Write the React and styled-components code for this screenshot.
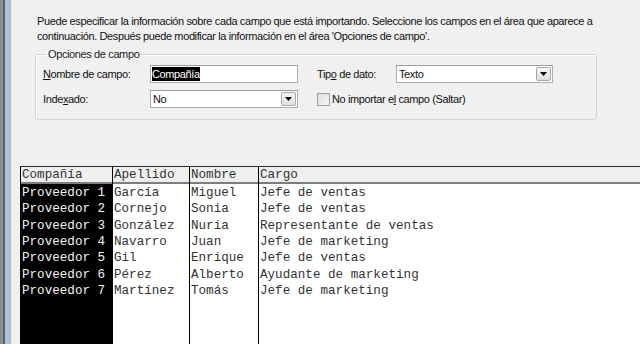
import React from 'react';
import styled, {createGlobalStyle} from 'styled-components';

const GlobalStyle = createGlobalStyle`
    html, body {
        margin: 0;
        padding: 0;
        background: #f0f0f0;
        overflow: hidden;
    }
    body {
        font-family: "Liberation Sans", Arial, sans-serif;
        font-size: 11px;
        letter-spacing: -0.38px;
        color: #111;
    }
`;

const Frame = styled.div`
    display: flex;
    height: 344px;
    width: 640px;
`;

const Edge = styled.div`
    width: 11px;
    flex: none;
    background: linear-gradient(to right,
        #8e8e8e 0, #8e8e8e 3px,
        #5c646e 3px, #5c646e 5px,
        #aac6e4 5px, #aac6e4 9px,
        #b8bcc2 9px, #b8bcc2 11px);
`;

const Main = styled.div`
    flex: 1;
    display: flex;
    flex-direction: column;
    min-width: 0;
`;

const Intro = styled.p`
    margin: 14px 0 0 26px;
    line-height: 15px;
    white-space: nowrap;
`;

const Group = styled.fieldset`
    margin: 4px 43px 0 24px;
    padding: 5px 0 11px 7px;
    border: 1px solid #d3d3d3;
    border-radius: 3px;
    box-shadow: inset 1px 1px 0 #fff;
`;

const Legend = styled.legend`
    padding: 0 2px;
    margin-left: 3px;
    color: #222;
`;

const FieldGrid = styled.div`
    display: grid;
    grid-template-columns: 107px 148px 19px 79px 157px;
    grid-auto-rows: 18px;
    row-gap: 7px;
    align-items: center;
`;

const Label = styled.span`
    grid-column: ${p => p.$col};
    white-space: nowrap;
`;

const Box = styled.div`
    grid-column: ${p => p.$col};
    height: 18px;
    box-sizing: border-box;
    border: 1px solid #abadb3;
    border-top-color: #9a9ca3;
    background: #fff;
    display: flex;
    align-items: center;
    padding-left: 1px;
`;

const Selected = styled.span`
    background: #000;
    color: #fff;
    line-height: 14px;
`;

const BoxText = styled.span`
    flex: 1;
    padding-left: 1px;
`;

const DropButton = styled.span`
    width: 15px;
    height: 14px;
    margin-right: 1px;
    box-sizing: border-box;
    border: 1px solid #a9a9a9;
    border-radius: 2px;
    background: linear-gradient(#f6f6f6, #dedede);
    display: flex;
    align-items: center;
    justify-content: center;
`;

const Check = styled.label`
    grid-column: 4 / 6;
    display: flex;
    align-items: center;
    gap: 2px;
    white-space: nowrap;
`;

const CheckSquare = styled.span`
    width: 13px;
    height: 13px;
    box-sizing: border-box;
    border: 1px solid #a0a0a0;
    background: linear-gradient(135deg, #dcdcdc, #f6f6f6);
`;

const Table = styled.div`
    flex: 1;
    margin: 46px 0 0 9px;
    display: flex;
    border-top: 1px solid #2a2a2a;
    font-family: "Liberation Mono", "Courier New", monospace;
    font-size: 12.6px;
    letter-spacing: 0;
`;

const Column = styled.div`
    width: ${p => p.$w ? p.$w + 'px' : 'auto'};
    flex: ${p => p.$w ? 'none' : '1'};
    display: flex;
    flex-direction: column;
    border-left: 1px solid #000;
`;

const Head = styled.div`
    height: 15px;
    line-height: 17px;
    padding-left: 1px;
    background: #efefef;
    border-bottom: 2px solid #7d7d7d;
    color: #333;
    white-space: nowrap;
`;

const Body = styled.div`
    flex: 1;
    padding-top: 1px;
    background: ${p => p.$dark ? '#000' : '#fff'};
    color: ${p => p.$dark ? '#f4f4f4' : '#333'};
`;

const Cell = styled.div`
    height: 16.33px;
    line-height: 16.33px;
    padding-left: 1px;
    white-space: nowrap;
`;

const columns = [
    {title: 'Compañía', w: 91, dark: true, rows: ['Proveedor 1', 'Proveedor 2', 'Proveedor 3', 'Proveedor 4', 'Proveedor 5', 'Proveedor 6', 'Proveedor 7']},
    {title: 'Apellido', w: 76, rows: ['García', 'Cornejo', 'González', 'Navarro', 'Gil', 'Pérez', 'Martínez']},
    {title: 'Nombre', w: 68, rows: ['Miguel', 'Sonia', 'Nuria', 'Juan', 'Enrique', 'Alberto', 'Tomás']},
    {title: 'Cargo', rows: ['Jefe de ventas', 'Jefe de ventas', 'Representante de ventas', 'Jefe de marketing', 'Jefe de ventas', 'Ayudante de marketing', 'Jefe de marketing']},
];

const Arrow = () => (
    <DropButton>
        <svg width="7" height="4" viewBox="0 0 7 4"><path d="M0 0h7L3.5 4z" fill="#000"/></svg>
    </DropButton>
);

const App = () => {
    return (
        <>
            <GlobalStyle/>
            <Frame>
                <Edge/>
                <Main>
                    <Intro>
                        Puede especificar la información sobre cada campo que está importando. Seleccione los campos en el área que aparece a<br/>
                        continuación. Después puede modificar la información en el área 'Opciones de campo'.
                    </Intro>
                    <Group>
                        <Legend>Opciones de campo</Legend>
                        <FieldGrid>
                            <Label $col={1}><u>N</u>ombre de campo:</Label>
                            <Box $col={2}><Selected>Compañía</Selected></Box>
                            <Label $col={4}>Tip<u>o</u> de dato:</Label>
                            <Box $col={5}><BoxText>Texto</BoxText><Arrow/></Box>

                            <Label $col={1}>Inde<u>x</u>ado:</Label>
                            <Box $col={2}><BoxText>No</BoxText><Arrow/></Box>
                            <Check><CheckSquare/><span>No importar e<u>l</u> campo (Saltar)</span></Check>
                        </FieldGrid>
                    </Group>
                    <Table>
                        {columns.map(col => (
                            <Column key={col.title} $w={col.w}>
                                <Head>{col.title}</Head>
                                <Body $dark={col.dark}>
                                    {col.rows.map((r, i) => <Cell key={i}>{r}</Cell>)}
                                </Body>
                            </Column>
                        ))}
                    </Table>
                </Main>
            </Frame>
        </>
    );
};

export default App;
